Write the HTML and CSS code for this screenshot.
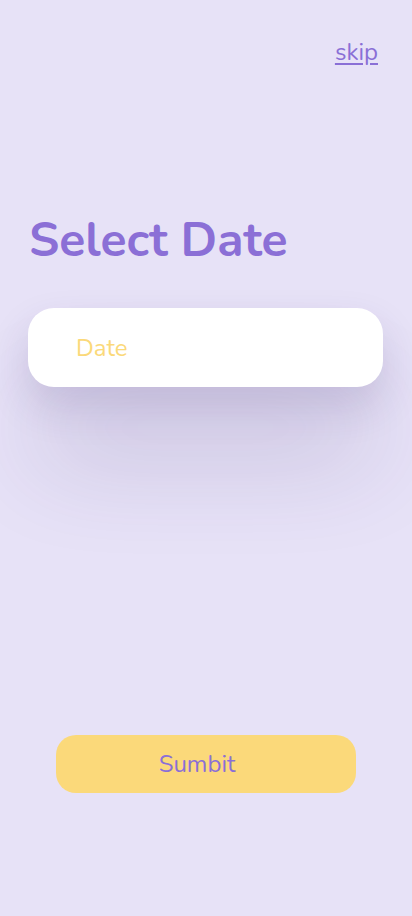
FILE: index.html
```html
<!DOCTYPE html>
<html>
<head>
<meta charset="utf-8">
<link rel="stylesheet" href="styles.css">
</head>
<body>
<div class="screen">
  <div class="top">
    <a class="skip" href="#">skip</a>
  </div>
  <h1 class="title">Select Date</h1>
  <div class="card">
    <span class="placeholder">Date</span>
  </div>
  <div class="spacer"></div>
  <div class="actions">
    <button class="submit">Sumbit</button>
  </div>
</div>
</body>
</html>
```
FILE: styles.css
```css
html, body {
  margin: 0;
  padding: 0;
  background: #e7e2f7;
}
.screen {
  width: 412px;
  height: 916px;
  display: flex;
  flex-direction: column;
  font-family: "Nunito", "Lato", "Noto Sans", sans-serif;
  box-sizing: border-box;
}
.top {
  display: flex;
  justify-content: flex-end;
  padding: 37px 34px 0 0;
}
.skip {
  color: #8a6fd6;
  font-size: 24px;
  text-decoration: underline;
  text-underline-offset: 3px;
  line-height: 30px;
}
.title {
  margin: 143px 0 0 29px;
  color: #8b6fd6;
  font-size: 48px;
  font-weight: 700;
  line-height: 60px;
}
.card {
  margin: 38px 29px 0 28px;
  height: 79px;
  background: #ffffff;
  border-radius: 26px;
  display: flex;
  align-items: center;
  padding-left: 48px;
  box-shadow: 0 80px 100px -10px rgba(60, 45, 110, 0.2), 0 20px 40px rgba(60, 45, 110, 0.16);
}
.placeholder {
  color: #fbd97a;
  font-size: 24px;
}
.spacer {
  flex: 1;
}
.actions {
  display: flex;
  padding: 0 56px 123px;
}
.submit {
  flex: 1;
  height: 58px;
  border: none;
  border-radius: 20px;
  background: #fbd97a;
  color: #8b6fd6;
  font-family: inherit;
  font-size: 24px;
  padding: 0 18px 0 0;
}
```
